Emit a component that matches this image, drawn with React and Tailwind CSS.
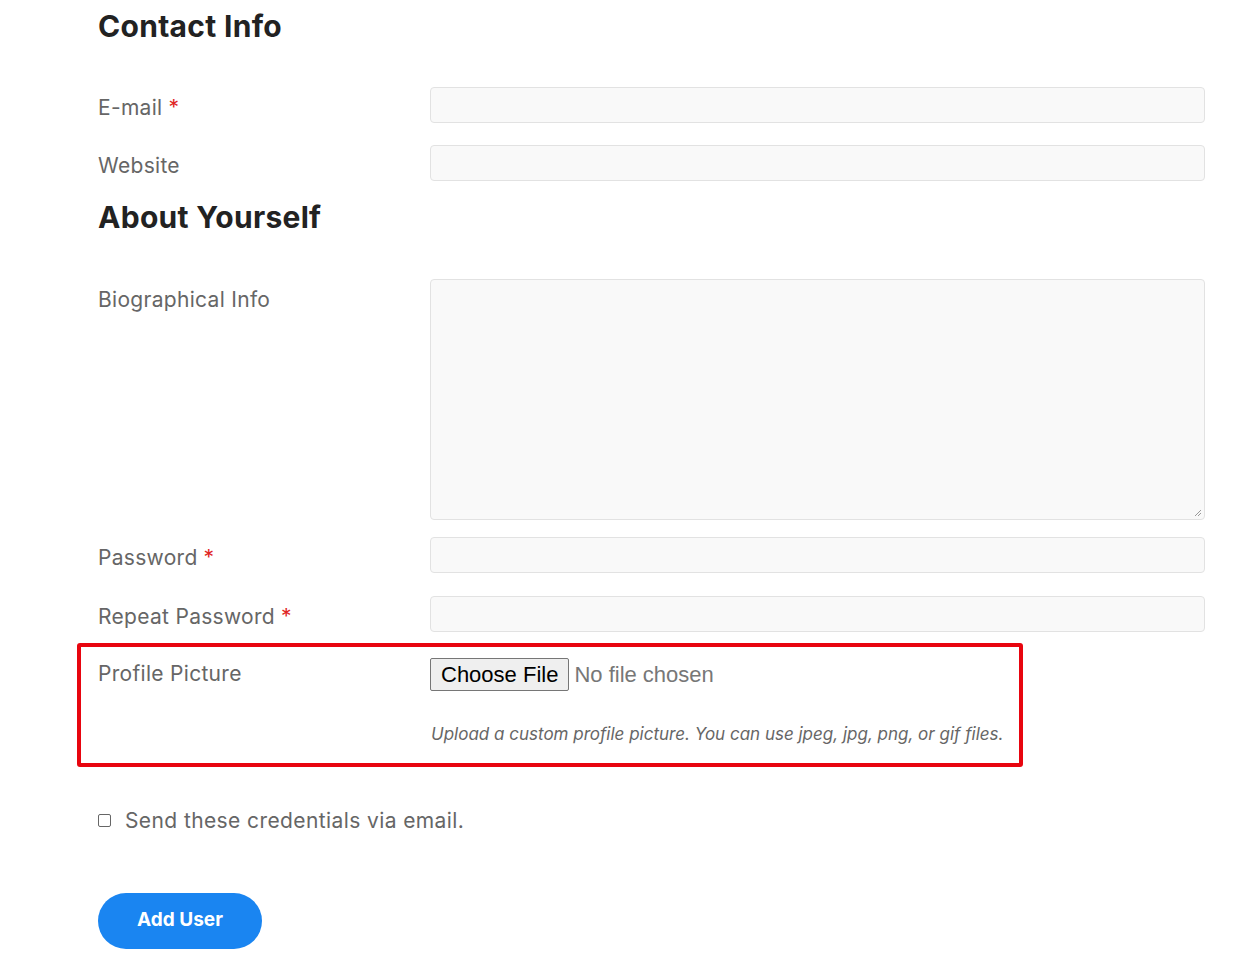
import React from "react";

function Req() {
  return <span className="ml-1.5 text-[#e02424]">*</span>;
}

function Row({ label, required, children, className = "" }) {
  return (
    <div className={`flex items-center ${className}`}>
      <div className="w-[332px] shrink-0 pt-[5px] text-[21px] tracking-[0.3px] text-[#666]">
        {label}
        {required && <Req />}
      </div>
      {children}
    </div>
  );
}

function Field() {
  return (
    <div className="h-[36px] w-[775px] rounded-[4px] border border-[#e2e2e2] bg-[#f9f9f9]" />
  );
}

export default function App() {
  return (
    <div className="min-h-screen bg-white pl-[98px] pt-[6px] font-['Inter',sans-serif]">
      {/* Contact Info */}
      <h2 className="text-[30px] font-bold leading-[40px] tracking-[0.3px] text-[#222]">
        Contact Info
      </h2>

      <Row label="E-mail" required className="mt-[41px]">
        <Field />
      </Row>
      <Row label="Website" className="mt-[21px]">
        <Field />
      </Row>

      {/* About Yourself */}
      <h2 className="mt-[16px] text-[30px] font-bold leading-[40px] tracking-[0.3px] text-[#222]">
        About Yourself
      </h2>

      <div className="mt-[42px] flex items-start">
        <div className="w-[332px] shrink-0 pt-[5px] text-[21px] tracking-[0.3px] text-[#666]">
          Biographical Info
        </div>
        <div className="relative h-[241px] w-[775px] rounded-[4px] border border-[#e2e2e2] bg-[#f9f9f9]">
          <svg
            className="absolute bottom-[2px] right-[2px]"
            width="10"
            height="10"
            viewBox="0 0 10 10"
          >
            <path d="M9 3 L3 9 M9 6 L6 9" stroke="#9a9a9a" strokeWidth="1" />
          </svg>
        </div>
      </div>

      <Row label="Password" required className="mt-[17px]">
        <Field />
      </Row>
      <Row label="Repeat Password" required className="mt-[22px]">
        <Field />
      </Row>

      {/* Profile Picture (highlighted) */}
      <div className="-ml-[21px] mt-[11px] h-[124px] w-[946px] rounded-[3px] border-[4px] border-[#e8050f] pl-[17px] pt-[11px]">
        <div className="flex items-start">
          <div className="w-[332px] shrink-0 text-[21px] tracking-[0.3px] text-[#666]">
            Profile Picture
          </div>
          <div className="flex flex-col">
            <div className="flex items-center font-['Liberation_Sans',Arial,sans-serif] text-[22px]">
              <span className="flex h-[33px] items-center rounded-[2px] border border-[#767676] bg-[#efefef] px-[10px] text-black">
                Choose File
              </span>
              <span className="ml-[5px] text-[#777]">No file chosen</span>
            </div>
            <div className="ml-px mt-[31px] text-[17px] italic text-[#666]">
              Upload a custom profile picture. You can use jpeg, jpg, png, or gif files.
            </div>
          </div>
        </div>
      </div>

      {/* Send credentials */}
      <label className="mt-[38px] flex items-center">
        <span className="h-[13px] w-[13px] rounded-[2px] border border-[#666] bg-white" />
        <span className="ml-[14px] text-[21px] tracking-[0.4px] text-[#666]">
          Send these credentials via email.
        </span>
      </label>

      <button className="mt-[56px] h-[56px] w-[164px] rounded-full bg-[#1a85f1] text-[19px] font-bold text-white">
        Add User
      </button>
    </div>
  );
}
